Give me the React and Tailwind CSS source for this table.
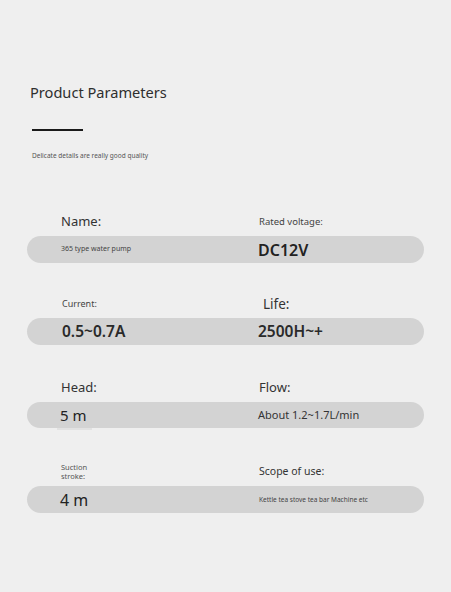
export default function App() {
  const font = { fontFamily: '"Noto Sans", "Open Sans", sans-serif' };
  return (
    <div className="w-[451px] h-[592px] bg-[#efefef] overflow-hidden text-[#333]" style={font}>
      <div className="pt-[81px] pl-[30px] text-[14.6px] leading-[22px] text-[#2e2e2e]">Product Parameters</div>
      <div className="ml-[32px] mt-[26px] w-[51px] h-[2px] bg-[#1a1a1a]"></div>
      <div className="ml-[32px] mt-[20px] text-[6.5px] leading-[10px] text-[#555]">Delicate details are really good quality</div>

      {/* Row 1 */}
      <div className="mt-[47px] h-[28px] flex items-center pl-[61px]">
        <div className="w-[198px] text-[13px] text-[#333]">Name:</div>
        <div className="text-[9.5px] text-[#444]">Rated voltage:</div>
      </div>
      <div className="mx-[27px] h-[27px] rounded-full bg-[#d3d3d3] flex items-center pl-[34px]">
        <div className="w-[197px] text-[7px] text-[#444]">365 type water pump</div>
        <div className="text-[16px] font-semibold text-[#222]">DC12V</div>
      </div>

      {/* Row 2 */}
      <div className="mt-[27px] h-[28px] flex items-center pl-[62px]">
        <div className="w-[201px] text-[9px] text-[#444]">Current:</div>
        <div className="text-[13.5px] text-[#333]">Life:</div>
      </div>
      <div className="mx-[27px] h-[27px] rounded-full bg-[#d3d3d3] flex items-center pl-[35px]">
        <div className="w-[196px] text-[15.5px] font-semibold text-[#2a2a2a]">0.5~0.7A</div>
        <div className="text-[15.5px] font-semibold text-[#2a2a2a]">2500H~+</div>
      </div>

      {/* Row 3 */}
      <div className="mt-[29px] h-[28px] flex items-center pl-[61px]">
        <div className="w-[198px] text-[13px] text-[#333]">Head:</div>
        <div className="text-[13px] text-[#333]">Flow:</div>
      </div>
      <div className="relative mx-[27px] h-[26px] rounded-full bg-[#d3d3d3] flex items-center pl-[33px]">
        <div className="w-[198px] text-[15px] text-[#222]">5 m</div>
        <div className="text-[11px] text-[#333]">About 1.2~1.7L/min</div>
        <div className="absolute left-[30px] top-[26px] w-[35px] h-[2px] bg-[#e2e2e2]"></div>
      </div>

      {/* Row 4 */}
      <div className="mt-[30px] h-[28px] flex items-center pl-[61px]">
        <div className="w-[198px] text-[7.5px] leading-[9px] text-[#555]">Suction<br />stroke:</div>
        <div className="text-[10.5px] text-[#333]">Scope of use:</div>
      </div>
      <div className="mx-[27px] h-[27px] rounded-full bg-[#d3d3d3] flex items-center pl-[33px]">
        <div className="w-[199px] text-[16px] text-[#222]">4 m</div>
        <div className="text-[6.5px] text-[#444]">Kettle tea stove tea bar Machine etc</div>
      </div>
    </div>
  );
}
